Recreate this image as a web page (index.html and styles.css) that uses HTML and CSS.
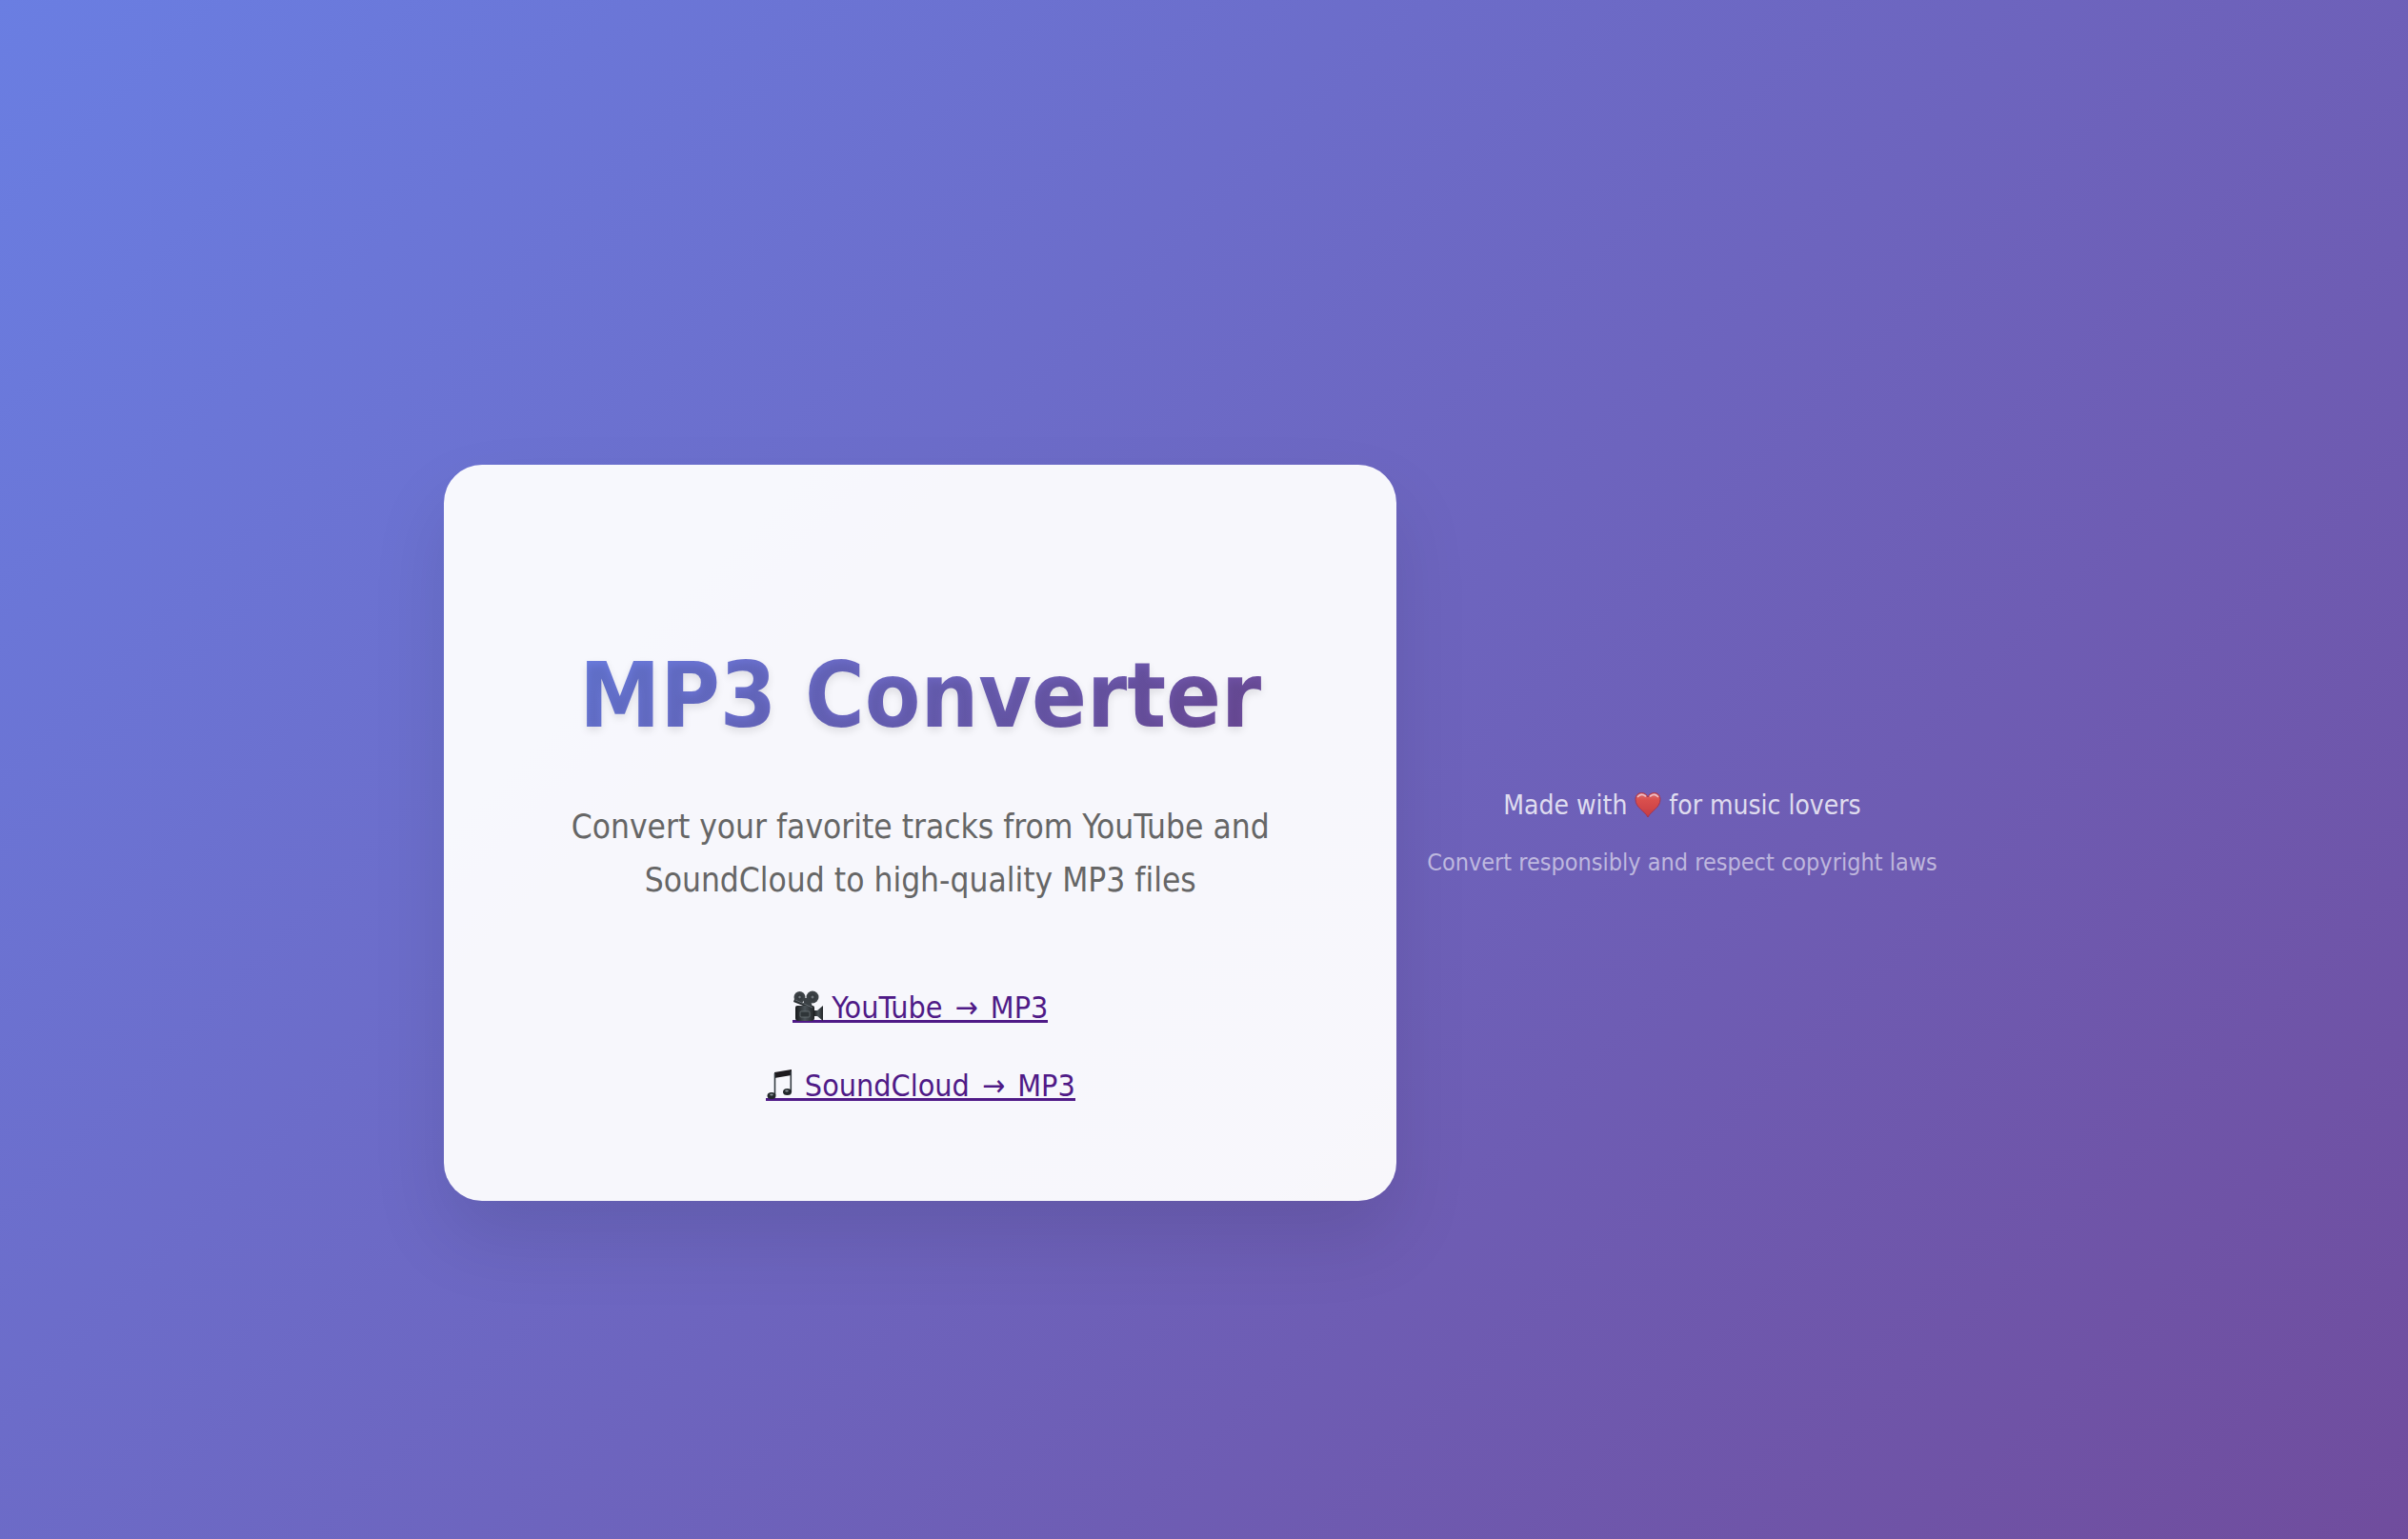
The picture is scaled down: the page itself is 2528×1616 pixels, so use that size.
FILE: index.html
```html
<!DOCTYPE html>
<html lang="en">
<head>
<meta charset="utf-8">
<meta name="viewport" content="width=device-width, initial-scale=1">
<title>MP3 Converter</title>
<link rel="stylesheet" href="styles.css">
</head>
<body>
<main class="card">
  <h1 class="title">MP3 Converter</h1>
  <p class="subtitle">Convert your favorite tracks from YouTube and SoundCloud to high-quality MP3 files</p>
  <nav class="links">
    <a class="link" href="#youtube"><svg class="icon" viewBox="0 0 32 32" aria-hidden="true">
      <defs>
        <linearGradient id="body" x1="0" y1="0" x2="1" y2="0"><stop offset="0" stop-color="#17191b"/><stop offset=".5" stop-color="#4b5358"/><stop offset="1" stop-color="#202326"/></linearGradient>
        <radialGradient id="reel"><stop offset="0" stop-color="#8f989d"/><stop offset=".3" stop-color="#33383c"/><stop offset="1" stop-color="#41474b"/></radialGradient>
      </defs>
      <circle cx="7.500" cy="7" r="6" fill="url(#reel)"/><circle cx="21" cy="7" r="6.500" fill="url(#reel)"/>
      <path d="M2 9l20 8-1 3L1 12z" fill="#2b3033"/>
      <path d="M12 8h6l3 9-9-3z" fill="#3a4044"/>
      <path d="M5 16h16q2 0 2 2v11q0 3-3 3H6q-3 0-3-3V18q0-2 2-2z" fill="url(#body)"/>
      <rect x="8" y="22" width="10" height="6" rx="1" fill="#2f3538" stroke="#727b80" stroke-width=".7"/>
      <path d="M22 21h4l6-5v16l-6-5h-4z" fill="url(#body)"/>
      <path d="M3 10l18 8" stroke="#788186" stroke-width=".7"/>
    </svg> YouTube <span class="arrow">→</span> MP3</a>
    <a class="link" href="#soundcloud"><svg class="icon" viewBox="0 0 32 32" aria-hidden="true">
      <path d="M9 4L27 1v6L9 10z" fill="#1d1a1e"/>
      <path d="M9.500 5v23M26.300 3v22" stroke="#343c42" stroke-width="1.600" fill="none"/>
      <ellipse cx="6" cy="28.500" rx="4.500" ry="3.500" fill="#23282b"/><ellipse cx="22.500" cy="24.500" rx="4.500" ry="3.500" fill="#23282b"/>
      <ellipse cx="6" cy="27.500" rx="1.800" ry="1" fill="#899297"/><ellipse cx="22" cy="23.500" rx="1.800" ry="1" fill="#899297"/>
    </svg> SoundCloud <span class="arrow">→</span> MP3</a>
  </nav>
</main>
<footer class="footer">
  <p class="credit">Made with <svg class="heart" viewBox="0 0 28 28" role="img" aria-label="love">
    <defs><linearGradient id="heart" x1="0" y1="0" x2="0" y2="1"><stop offset="0" stop-color="#e0706f"/><stop offset=".3" stop-color="#d94f4d"/><stop offset="1" stop-color="#c63c42"/></linearGradient></defs>
    <path d="M14 27C11 21 1 17 1 8.500C1 4 4 1.500 7.500 1.500C10.500 1.500 13 3.500 14 6C15 3.500 17.500 1.500 20.500 1.500C24 1.500 27 4 27 8.500C27 17 17 21 14 27z" fill="url(#heart)" stroke="#a33550" stroke-width="1"/>
    <path d="M3.500 5.500Q7 1.500 11.500 5M16.500 5Q21 1.500 24.500 5.500" fill="none" stroke="#ecc0c8" stroke-width="1.600" stroke-linecap="round"/>
  </svg> for music lovers</p>
  <p class="notice">Convert responsibly and respect copyright laws</p>
</footer>
</body>
</html>
```
FILE: styles.css
```css
* {
  box-sizing: border-box;
  margin: 0;
}

body {
  min-height: 100vh;
  padding-top: 132px;
  display: flex;
  align-items: center;
  justify-content: center;
  font-family: Tahoma, "DejaVu Sans Condensed", "Noto Sans", sans-serif;
  font-variant-ligatures: none;
  background: linear-gradient(135deg, #6a7ee2, #704b9b) top / 100% calc(100% + 132px) no-repeat;
}

.card {
  width: 100%;
  max-width: 1000px;
  padding: 178px 96px 96px;
  border-radius: 40px;
  background: rgba(255, 255, 255, 0.95);
  box-shadow: 0 40px 80px rgba(0, 0, 0, 0.1);
  text-align: center;
}

.title {
  width: fit-content;
  margin: 0 auto 46px;
  font-size: 95px;
  line-height: 128px;
  font-weight: 700;
  color: transparent;
  background: linear-gradient(135deg, #6a7ee2, #704b9b);
  background-clip: text;
  text-shadow: 0 4px 8px rgba(0, 0, 0, 0.1);
}

.subtitle {
  font-size: 35px;
  line-height: 56px;
  color: #666;
}

.links {
  margin-top: 81px;
  display: flex;
  flex-direction: column;
  align-items: center;
  gap: 32px;
}

.link {
  font-size: 32px;
  line-height: 50px;
  color: #4f1a87;
  text-decoration: none;
  background: linear-gradient(currentColor, currentColor) 0 38px / 100% 3px no-repeat;
}

.arrow {
  padding: 0 4px;
}

.icon {
  width: 32px;
  height: 32px;
  vertical-align: -3px;
}

.footer {
  padding: 0 28px 0 32px;
  text-align: center;
  color: rgba(255, 255, 255, 0.8);
}

.credit {
  font-size: 28px;
  line-height: 48px;
}

.heart {
  width: 28px;
  height: 28px;
  vertical-align: -4px;
}

.notice {
  margin-top: 16px;
  font-size: 25px;
  line-height: 40px;
  color: rgba(255, 255, 255, 0.56);
}
```
